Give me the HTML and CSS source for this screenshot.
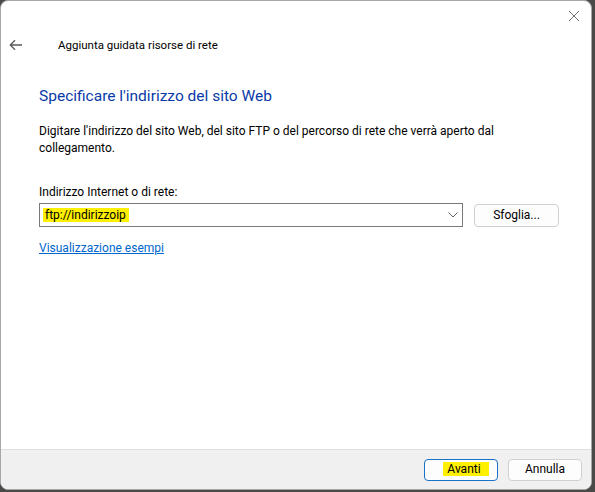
FILE: index.html
```html
<!DOCTYPE html>
<html lang="it">
<head>
<meta charset="utf-8">
<title>Aggiunta guidata risorse di rete</title>
<link rel="stylesheet" href="styles.css">
</head>
<body>
<div class="window">
  <div class="titlebar">
    <button class="close" aria-label="Chiudi">
      <svg width="12" height="12" viewBox="0 0 12 12"><path d="M1 1 L11 11 M11 1 L1 11" stroke="#6f6f6f" stroke-width="1" fill="none"/></svg>
    </button>
  </div>
  <div class="header">
    <span class="back">
      <svg width="14" height="12" viewBox="0 0 14 12"><path d="M13 6 H1.5 M6 1.3 L1.3 6 L6 10.7" stroke="#5a5a5a" stroke-width="1.3" fill="none"/></svg>
    </span>
    <span class="title">Aggiunta guidata risorse di rete</span>
  </div>
  <div class="content">
    <h1 class="heading">Specificare l'indirizzo del sito Web</h1>
    <p class="desc">Digitare l'indirizzo del sito Web, del sito FTP o del percorso di rete che verrà aperto dal collegamento.</p>
    <label class="label">Indirizzo Internet o di rete:</label>
    <div class="row">
      <div class="combo">
        <span class="value"><mark class="hl">ftp://indirizzoip</mark></span>
        <svg class="chev" width="10" height="6" viewBox="0 0 10 6"><path d="M0.5 0.5 L5 5 L9.5 0.5" stroke="#606060" stroke-width="1" fill="none"/></svg>
      </div>
      <button class="btn browse">Sfoglia...</button>
    </div>
    <a class="link" href="#">Visualizzazione esempi</a>
  </div>
  <div class="footer">
    <button class="btn primary"><mark class="hl hl-btn">Avanti</mark></button>
    <button class="btn">Annulla</button>
  </div>
</div>
</body>
</html>
```
FILE: styles.css
```css
* { box-sizing: border-box; }
html, body { margin: 0; padding: 0; }
body {
  width: 595px;
  height: 492px;
  background: #4a4a48;
  font-family: Roboto, "Noto Sans", sans-serif;
  font-size: 12px;
  color: #000;
  overflow: hidden;
}
.window {
  width: 592px;
  height: 490px;
  background: #fff;
  border: 1px solid #a8a8a8;
  border-radius: 8px;
  overflow: hidden;
  display: flex;
  flex-direction: column;
}
.titlebar {
  height: 30px;
  display: flex;
  justify-content: flex-end;
  align-items: center;
}
.close {
  width: 30px;
  height: 30px;
  border: 0;
  background: transparent;
  padding: 0;
  margin-right: 2px;
  display: flex;
  align-items: center;
  justify-content: center;
}
.close svg { display: block; }
.header {
  height: 28px;
  display: flex;
  align-items: center;
}
.back {
  width: 57px;
  padding-left: 8px;
  display: flex;
  align-items: center;
}
.back svg { display: block; }
.title {
  font-size: 11.5px;
  line-height: 17px;
}
.content {
  padding-left: 38px;
  padding-right: 34px;
  display: flex;
  flex-direction: column;
  align-items: flex-start;
}
.heading {
  margin: 26px 0 0 0;
  font-size: 15.5px;
  font-weight: normal;
  line-height: 22px;
  color: #0a3aa8;
}
.desc {
  margin: 16px 0 0 0;
  line-height: 17px;
  width: 480px;
}
.label {
  margin-top: 27px;
  line-height: 17px;
}
.row {
  margin-top: 2px;
  display: flex;
  align-items: center;
  gap: 11px;
}
.combo {
  width: 424px;
  height: 24px;
  border: 1px solid #7a7a7a;
  display: flex;
  align-items: center;
  justify-content: space-between;
  padding: 0 4px 0 3px;
}
.value { line-height: 17px; }
.hl {
  background: #ffef00;
  color: #000;
  padding: 0 3px 0 2px;
}
.chev { display: block; }
.btn {
  font-family: inherit;
  font-size: 12px;
  height: 23px;
  background: #fdfdfd;
  border: 1px solid #d0d0d0;
  border-radius: 4px;
  padding: 0;
  color: #000;
  line-height: 17px;
}
.browse { width: 85px; }
.link {
  margin-top: 13px;
  color: #0066cc;
  text-decoration: underline;
  line-height: 17px;
}
.footer {
  margin-top: auto;
  height: 40px;
  background: #f0f0f0;
  border-top: 1px solid #dfdfdf;
  display: flex;
  justify-content: flex-end;
  align-items: center;
  gap: 10px;
  padding-right: 9px;
  padding-bottom: 0;
}
.footer .btn { width: 74px; height: 22px; }
.primary { border-color: #1a73c8; }
.hl-btn { padding: 0 8px 0 4px; margin-left: 10px; }
```
